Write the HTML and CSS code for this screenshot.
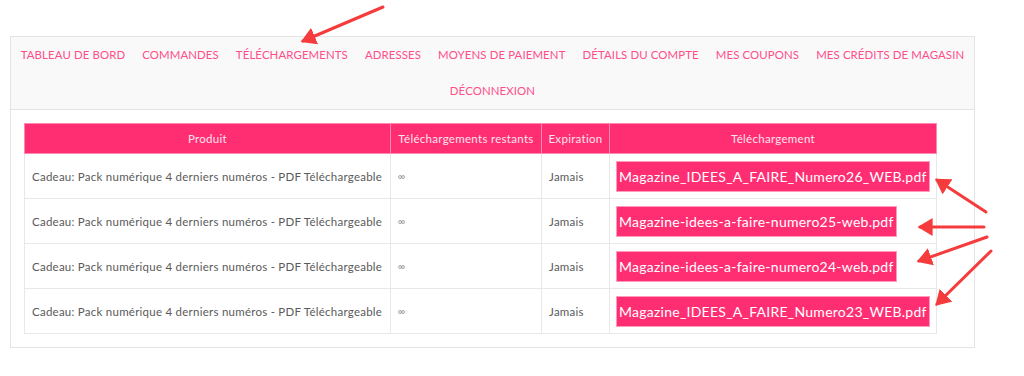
FILE: index.html
```html
<!DOCTYPE html>
<html lang="fr">
<head>
  <meta charset="UTF-8">
  <title>Téléchargements</title>
  <link rel="stylesheet" href="styles.css">
</head>
<body>

<div class="account">
  <nav class="account-nav">
    <a href="#">Tableau de bord</a>
    <a href="#">Commandes</a>
    <a href="#">Téléchargements</a>
    <a href="#">Adresses</a>
    <a href="#">Moyens de paiement</a>
    <a href="#">Détails du compte</a>
    <a href="#">Mes coupons</a>
    <a href="#">Mes crédits de magasin</a>
    <a href="#">Déconnexion</a>
  </nav>

  <div class="account-content">
    <table class="downloads">
      <colgroup>
        <col style="width:366px">
        <col style="width:151px">
        <col style="width:68px">
        <col style="width:327px">
      </colgroup>
      <thead>
        <tr>
          <th>Produit</th>
          <th>Téléchargements restants</th>
          <th>Expiration</th>
          <th>Téléchargement</th>
        </tr>
      </thead>
      <tbody>
        <tr>
          <td>Cadeau: Pack numérique 4 derniers numéros - PDF Téléchargeable</td>
          <td class="inf">∞</td>
          <td>Jamais</td>
          <td class="dl"><a class="file" href="#">Magazine_IDEES_A_FAIRE_Numero26_WEB.pdf</a></td>
        </tr>
        <tr>
          <td>Cadeau: Pack numérique 4 derniers numéros - PDF Téléchargeable</td>
          <td class="inf">∞</td>
          <td>Jamais</td>
          <td class="dl"><a class="file" href="#">Magazine-idees-a-faire-numero25-web.pdf</a></td>
        </tr>
        <tr>
          <td>Cadeau: Pack numérique 4 derniers numéros - PDF Téléchargeable</td>
          <td class="inf">∞</td>
          <td>Jamais</td>
          <td class="dl"><a class="file" href="#">Magazine-idees-a-faire-numero24-web.pdf</a></td>
        </tr>
        <tr>
          <td>Cadeau: Pack numérique 4 derniers numéros - PDF Téléchargeable</td>
          <td class="inf">∞</td>
          <td>Jamais</td>
          <td class="dl"><a class="file" href="#">Magazine_IDEES_A_FAIRE_Numero23_WEB.pdf</a></td>
        </tr>
      </tbody>
    </table>
  </div>
</div>

<!-- annotation arrows drawn over the screenshot -->
<svg class="arrows" width="1024" height="376" viewBox="0 0 1024 376">
  <defs>
    <marker id="head" markerWidth="6" markerHeight="6" refX="4.2" refY="3" orient="auto" markerUnits="strokeWidth">
      <path d="M0,0 L5,3 L0,6 Z" fill="#f53b3b"/>
    </marker>
  </defs>
  <g stroke="#f53b3b" stroke-width="3" stroke-linecap="round" marker-end="url(#head)">
    <line x1="383" y1="7" x2="303" y2="41"/>
    <line x1="986" y1="212" x2="937" y2="180"/>
    <line x1="984" y1="227" x2="920" y2="227"/>
    <line x1="987" y1="237" x2="919" y2="261"/>
    <line x1="991" y1="251" x2="937" y2="304"/>
  </g>
</svg>

</body>
</html>
```

FILE: styles.css
```css
body {
  margin: 0;
  padding: 36px 0 0 10px;
  font-family: Lato, 'Open Sans', sans-serif;
  background: #fff;
}

.account {
  width: 965px;
  box-sizing: border-box;
  border: 1px solid #e4e4e4;
}

.account-nav {
  display: flex;
  flex-wrap: wrap;
  justify-content: center;
  column-gap: 17px;
  padding: 0 2px;
  background: #f9f9f9;
  border-bottom: 1px solid #e4e4e4;
}

.account-nav a {
  line-height: 36px;
  font-size: 11.4px;
  text-transform: uppercase;
  letter-spacing: 0.12px;
  color: #ff4d89;
  text-decoration: none;
}

.account-content {
  padding: 13px 0 13px 13px;
}

.downloads {
  width: 912px;
  table-layout: fixed;
  border-collapse: collapse;
  font-size: 11.5px;
}

.downloads th {
  height: 29px;
  padding: 0 6px;
  background: #ff2e73;
  color: #ffe3ec;
  font-weight: normal;
  letter-spacing: 0.3px;
  border: 1px solid #ff89ae;
  white-space: nowrap;
}

.downloads td {
  height: 44px;
  padding: 0 7px;
  color: #5a5a5a;
  border: 1px solid #e8e8e8;
  letter-spacing: 0.25px;
  white-space: nowrap;
}

.downloads td.inf {
  font-size: 10px;
  color: #888;
}

.downloads td.dl {
  padding-left: 6px;
}

.file {
  display: inline-block;
  padding: 6px 2px;
  background: #ff2e73;
  border: 1px solid #ff9bbb;
  color: #fff;
  font-size: 14px;
  letter-spacing: 0.25px;
  text-decoration: none;
}

.arrows {
  position: absolute;
  top: 0;
  left: 0;
  pointer-events: none;
}
```
